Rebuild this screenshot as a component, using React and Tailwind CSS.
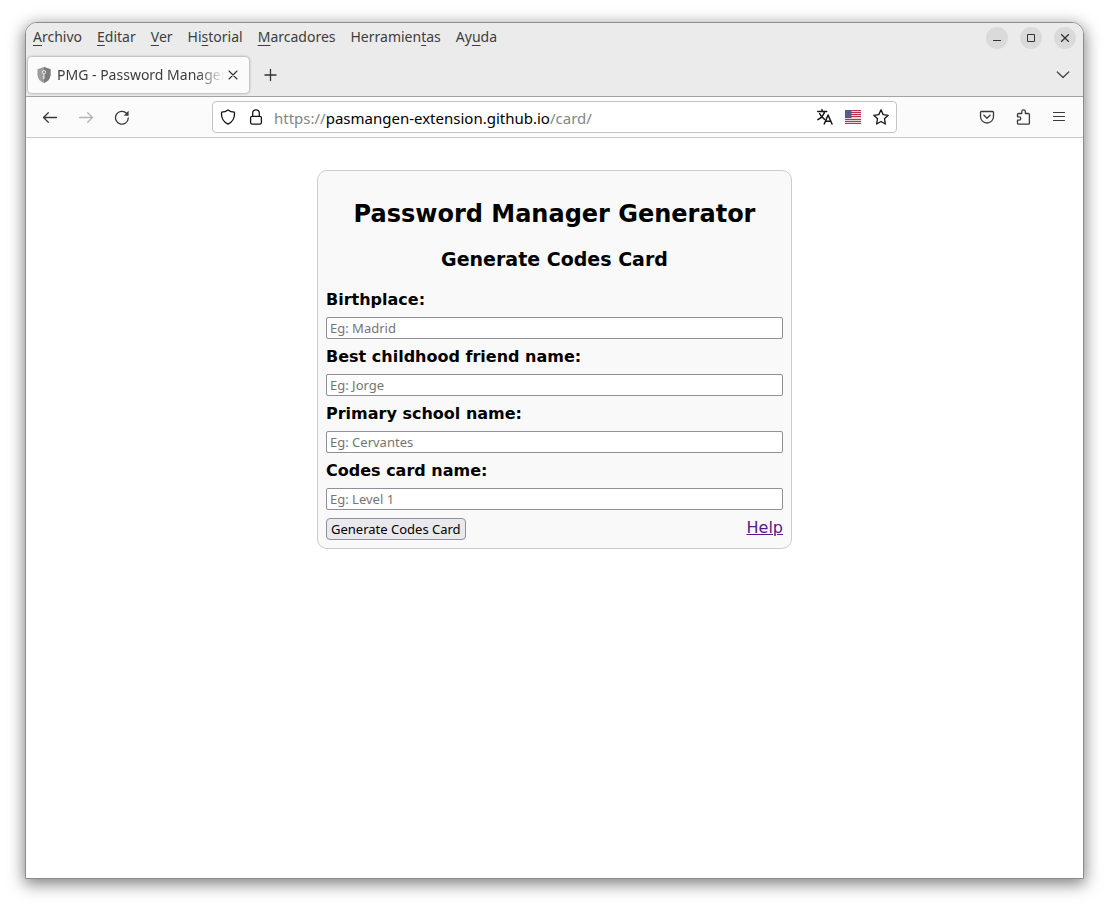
const menus = [
  ['', 'A', 'rchivo'],
  ['', 'E', 'ditar'],
  ['', 'V', 'er'],
  ['Hi', 's', 'torial'],
  ['', 'M', 'arcadores'],
  ['Herramien', 't', 'as'],
  ['Ay', 'u', 'da'],
];

const fields = [
  { id: 'birthplace', label: 'Birthplace:', placeholder: 'Eg: Madrid' },
  { id: 'friend', label: 'Best childhood friend name:', placeholder: 'Eg: Jorge' },
  { id: 'school', label: 'Primary school name:', placeholder: 'Eg: Cervantes' },
  { id: 'card', label: 'Codes card name:', placeholder: 'Eg: Level 1' },
];

function Icon({ children, className = 'size-4' }) {
  return (
    <svg
      viewBox="0 0 16 16"
      className={className}
      fill="none"
      stroke="currentColor"
      strokeWidth="1.3"
      strokeLinecap="round"
      strokeLinejoin="round"
      aria-hidden="true"
    >
      {children}
    </svg>
  );
}

function ToolButton({ label, disabled, children }) {
  return (
    <button
      type="button"
      aria-label={label}
      disabled={disabled}
      className="flex h-8 w-9 items-center justify-center text-[#3a3a3a] disabled:text-[#b4b4b4]"
    >
      {children}
    </button>
  );
}

function UrlButton({ label, children }) {
  return (
    <button type="button" aria-label={label} className="flex h-7 w-7 shrink-0 items-center justify-center text-[#151515]">
      {children}
    </button>
  );
}

function WindowButton({ label, children }) {
  return (
    <button
      type="button"
      aria-label={label}
      className="flex size-[22px] items-center justify-center rounded-full bg-[#dadada] text-[#333]"
    >
      <svg viewBox="0 0 10 10" className="size-[10px]" fill="none" stroke="currentColor" aria-hidden="true">
        {children}
      </svg>
    </button>
  );
}

function MenuBar() {
  return (
    <div className="flex h-[30px] items-center justify-between px-[7px]">
      <nav className="flex gap-[15px] pb-[2px] text-[14px] leading-5 text-[#3d3d3d]">
        {menus.map(([before, key, after]) => (
          <button type="button" key={before + key + after}>
            {before}
            <span className="underline underline-offset-3">{key}</span>
            {after}
          </button>
        ))}
      </nav>
      <div className="flex gap-3">
        <WindowButton label="Minimizar">
          <path d="M1 7.5h8" />
        </WindowButton>
        <WindowButton label="Maximizar">
          <path d="M1.5 1.5h7v7h-7z" />
        </WindowButton>
        <WindowButton label="Cerrar">
          <path d="M1.2 1.2l7.6 7.6M8.8 1.2L1.2 8.8" strokeWidth="1.3" />
        </WindowButton>
      </div>
    </div>
  );
}

function TabStrip() {
  return (
    <div className="flex h-11 items-center border-b border-[#a3a3a3] pl-[2px]">
      <div className="flex h-9 w-[221px] items-center rounded bg-[#fbfbfb] px-2 shadow-[0_0_3px_rgba(0,0,0,0.45)]">
        <svg viewBox="0 0 16 16" className="size-4 shrink-0" aria-hidden="true">
          <path d="M8 0l6.5 2.3v5.2c0 4-2.6 7-6.5 8.5C4.1 14.5 1.5 11.5 1.5 7.500V2.3z" fill="#9b9b9b" />
          <path d="M8 0l6.5 2.3v5.2c0 4-2.6 7-6.5 8.5z" fill="#7b7b7b" />
          <circle cx="8" cy="5.2" r="1.7" fill="none" stroke="#e8e8e8" strokeWidth="1" />
          <path d="M8 7v5M8 9.5H6.7M8 11.5H6.7" fill="none" stroke="#e8e8e8" strokeWidth="1" />
        </svg>
        <span className="ml-[5px] min-w-0 flex-1 pt-px text-[14px] leading-5 whitespace-nowrap text-[#3d3d3d] [mask-image:linear-gradient(to_left,transparent,black_28px)]">
          PMG - Password Manager
        </span>
        <button type="button" aria-label="Cerrar pestaña" className="flex size-4 shrink-0 items-center justify-center text-[#333]">
          <Icon>
            <path d="M4 4l8 8M12 4l-8 8" strokeWidth="1.1" />
          </Icon>
        </button>
      </div>
      <button type="button" aria-label="Nueva pestaña" className="ml-1 flex size-9 items-center justify-center text-[#333]">
        <Icon>
          <path d="M7.500 2.500v11M2 8h11" strokeWidth="1.3" />
        </Icon>
      </button>
      <button type="button" aria-label="Lista de pestañas" className="mr-[2px] ml-auto flex size-9 items-center justify-center text-[#444]">
        <Icon>
          <path d="M2.3 5L8 10.5 13.7 5" />
        </Icon>
      </button>
    </div>
  );
}

function Flag() {
  return (
    <svg viewBox="0 0 16 14" className="h-[14px] w-4" aria-hidden="true">
      <path d="M0 0h16v14H0z" fill="#ecd3d8" />
      <path
        d="M0 .5h16M0 2.5h16M0 4.5h16M0 6.5h16M0 9.5h16M0 11.5h16M0 13.5h16"
        stroke="#b8354b"
        strokeWidth="1"
      />
      <path d="M0 0h6.5v8H0z" fill="#55558c" />
      <path d="M1 1.5h5M1 3.5h5M1 5.5h5" stroke="#7878a8" strokeWidth=".6" strokeDasharray=".7 .7" />
    </svg>
  );
}

function NavBar() {
  return (
    <div className="flex h-[41px] items-center border-b border-[#c9c9c9] bg-[#fbfbfb] px-[6px]">
      <div className="flex">
        <ToolButton label="Atrás">
          <Icon>
            <path d="M14.5 8.5h-13M6.3 3.7L1.5 8.5l4.8 4.8" />
          </Icon>
        </ToolButton>
        <ToolButton label="Adelante" disabled>
          <Icon>
            <path d="M1.5 8.5h13M9.7 3.7L14.5 8.5l-4.800 4.8" />
          </Icon>
        </ToolButton>
        <ToolButton label="Recargar">
          <Icon>
            <path d="M14.3 9A6.400 6.4 0 1 1 12.500 4.3" />
            <path d="M14.600 1.800v5H9.700z" fill="currentColor" stroke="none" />
          </Icon>
        </ToolButton>
      </div>
      <div className="mx-[72px] flex h-8 min-w-0 flex-1 items-center rounded border border-[#c4c4c4] bg-white px-px">
        <UrlButton label="Protección">
          <Icon>
            <path d="M8 .9c2 1.5 4 2.1 6.4 2.3.6 5.3-1.1 9.400-6.400 12C2.700 12.600 1 8.500 1.600 3.200 4 3 6 2.400 8 .9z" />
          </Icon>
        </UrlButton>
        <UrlButton label="Seguridad del sitio">
          <Icon>
            <rect x="2.6" y="7.3" width="10.8" height="7.9" rx="1.6" />
            <path d="M4.700 7.300V4.100a3.300 3.300 0 0 1 6.600 0v3.200" />
          </Icon>
        </UrlButton>
        <div className="ml-1 min-w-0 flex-1 overflow-hidden pt-px text-[15px] leading-5 whitespace-nowrap text-[#858585]">
          https://<span className="text-black">pasmangen-extension.github.io</span>/card/
        </div>
        <UrlButton label="Traducir">
          <Icon>
            <path d="M.7 2.500h9M5 .7v1.800M7.600 2.700C6.600 6.200 4.200 8.800.9 10.700M2.700 4.700c1 2.200 2.700 4.200 4.900 5.600" strokeWidth="1.5" />
            <path d="M7.200 15l3.900-9 3.900 9M8.500 12.300h5.200" strokeWidth="1.5" />
          </Icon>
        </UrlButton>
        <UrlButton label="Inglés">
          <Flag />
        </UrlButton>
        <UrlButton label="Añadir a marcadores">
          <Icon>
            <path d="M8 .9l2.200 4.700 5 .7-3.700 3.500.9 5.200L8 12.500 3.600 15l.9-5.200L.8 6.300l5-.7z" />
          </Icon>
        </UrlButton>
      </div>
      <div className="flex">
        <ToolButton label="Pocket">
          <Icon>
            <path d="M2.500 2.500h11c.6 0 1 .4 1 1v4a6.500 6.500 0 0 1-13 0v-4c0-.6.4-1 1-1z" />
            <path d="M4.900 6.300L8 9.300l3.100-3" />
          </Icon>
        </ToolButton>
        <ToolButton label="Extensiones">
          <Icon>
            <path d="M3.500 4.500h3.300V2.700a1.800 1.800 0 0 1 3.600 0v1.800h3c.6 0 1 .4 1 1v8.700c0 .6-.4 1-1 1H3.500c-.6 0-1-.4-1-1v-3h1.600a1.700 1.700 0 0 0 0-3.400H2.500V5.500c0-.6.4-1 1-1z" />
          </Icon>
        </ToolButton>
        <ToolButton label="Menú">
          <Icon>
            <path d="M2.500 3.500h11M2.500 7.500h11M2.500 11.500h11" strokeWidth="1.2" />
          </Icon>
        </ToolButton>
      </div>
    </div>
  );
}

function CodesCard() {
  return (
    <form className="flex w-full max-w-[475px] flex-col rounded-[10px] border border-[#ccc] bg-[#f9f9f9] p-2 text-black">
      <h2 className="mt-[21px] text-center text-[24px] leading-7 font-bold">Password Manager Generator</h2>
      <h3 className="mt-5 mb-[19px] text-center text-[19px] leading-[23px] font-bold">Generate Codes Card</h3>
      <div className="flex flex-col gap-2">
        {fields.map((field) => (
          <div key={field.id} className="flex flex-col gap-2">
            <label htmlFor={field.id} className="text-[16px] leading-[19px] font-bold">
              {field.label}
            </label>
            <input
              id={field.id}
              type="text"
              placeholder={field.placeholder}
              className="h-[22px] w-full rounded-[2px] border border-[#8f8f9d] bg-white px-[3px] font-['Noto_Sans',sans-serif] text-[13px] leading-4 placeholder:text-[#757575]"
            />
          </div>
        ))}
        <div className="flex items-start justify-between">
          <button
            type="button"
            className="h-[22px] rounded border border-[#8f8f9d] bg-[#e9e9ed] px-1 font-['Noto_Sans',sans-serif] text-[13px] leading-4"
          >
            Generate Codes Card
          </button>
          <a href="#help" className="text-[16px] leading-[19px] text-[#551a8b] underline">
            Help
          </a>
        </div>
      </div>
    </form>
  );
}

export default function App() {
  return (
    <div className="flex min-h-screen bg-white px-[25px] pt-[22px] pb-7 font-['Noto_Sans',sans-serif]">
      <div className="flex min-w-0 flex-1 flex-col overflow-hidden rounded-t-[12px] border border-[#8c8c8c] bg-white shadow-[0_4px_16px_1px_rgba(0,0,0,0.5)]">
        <header className="bg-[#ebebeb]">
          <MenuBar />
          <TabStrip />
          <NavBar />
        </header>
        <main className="flex flex-1 items-start justify-center px-4 pt-8 pb-8 font-['DejaVu_Sans',sans-serif]">
          <CodesCard />
        </main>
      </div>
    </div>
  );
}
